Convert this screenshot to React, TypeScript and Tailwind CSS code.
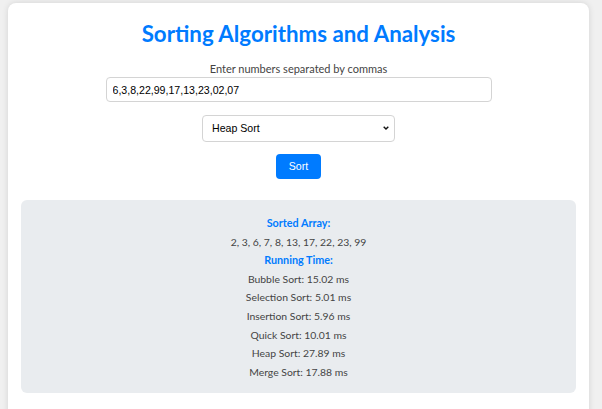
const times = [
  { name: "Bubble Sort", ms: "15.02" },
  { name: "Selection Sort", ms: "5.01" },
  { name: "Insertion Sort", ms: "5.96" },
  { name: "Quick Sort", ms: "10.01" },
  { name: "Heap Sort", ms: "27.89" },
  { name: "Merge Sort", ms: "17.88" },
];

export default function App() {
  return (
    <div className="h-[409px] overflow-hidden bg-[#f0f0f0] pt-[3px] pl-2 pr-[13px] font-['Lato','Open_Sans',sans-serif]">
      <div className="h-[420px] rounded-lg bg-white px-[13px] pt-[17px] shadow-[0_0_6px_rgba(0,0,0,0.12)]">
        <h1 className="text-center text-[22.3px] leading-[28px] font-bold text-[#007bff]">
          Sorting Algorithms and Analysis
        </h1>

        <div className="mt-[14px] flex flex-col items-center">
          <label className="text-[11px] leading-[14px] text-[#444]">Enter numbers separated by commas</label>
          <input
            className="mt-[1px] h-[25px] w-[386px] rounded-[4px] border border-[#d4d4d4] px-[6px] font-['Liberation_Sans',Arial,sans-serif] text-[10.6px] text-black outline-none"
            defaultValue="6,3,8,22,99,17,13,23,02,07"
          />
          <div className="relative mt-[12px] h-[27px] w-[193px]">
            <select
              className="h-full w-full appearance-none rounded-[4px] border border-[#d4d4d4] bg-white px-[9px] font-['Liberation_Sans',Arial,sans-serif] text-[10.6px] text-black outline-none"
              defaultValue="heap"
            >
              <option value="bubble">Bubble Sort</option>
              <option value="heap">Heap Sort</option>
            </select>
            <svg
              className="pointer-events-none absolute right-[6px] top-[12px]"
              width="6"
              height="4"
              viewBox="0 0 6 4"
            >
              <path d="M0.7 0.7 L3 3 L5.3 0.7" fill="none" stroke="#111" strokeWidth="1.4" />
            </svg>
          </div>
          <button className="mt-[13px] h-[25px] w-[45px] rounded-[4px] bg-[#007bff] font-['Liberation_Sans',Arial,sans-serif] text-[10.6px] text-white">
            Sort
          </button>
        </div>

        <div className="mt-[21px] flex h-[193px] flex-col items-center rounded-[6px] bg-[#e9ecef] pt-[14px] text-[10.4px] leading-[18.6px] text-[#444]">
          <h3 className="text-[10.8px] font-bold text-[#007bff]">Sorted Array:</h3>
          <p>2, 3, 6, 7, 8, 13, 17, 22, 23, 99</p>
          <h3 className="text-[10.8px] font-bold text-[#007bff]">Running Time:</h3>
          {times.map((t) => (
            <p key={t.name}>
              {t.name}: {t.ms} ms
            </p>
          ))}
        </div>
      </div>
    </div>
  );
}
